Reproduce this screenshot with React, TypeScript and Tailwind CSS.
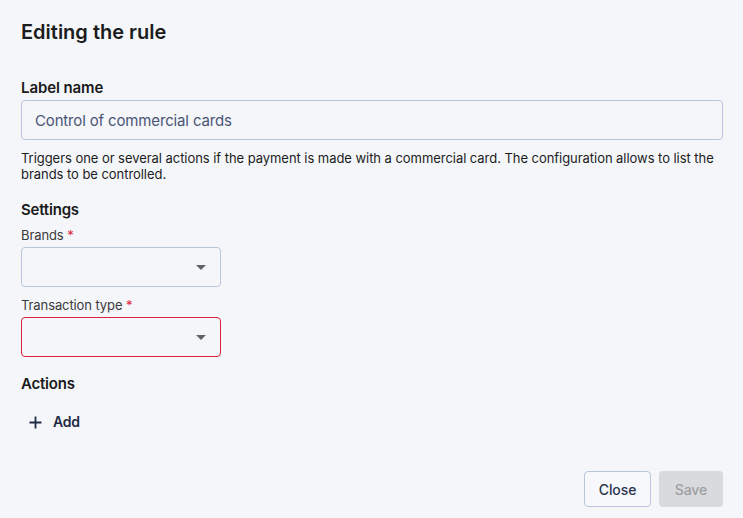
import React from "react";

function Caret() {
  return (
    <svg width="10" height="5" viewBox="0 0 10 5" className="text-[#5f6368]">
      <path d="M0 0 L10 0 L5 5 Z" fill="currentColor" />
    </svg>
  );
}

function Select({ error }: { error?: boolean }) {
  return (
    <div
      className={`w-[200px] h-[40px] rounded-[4px] border flex items-center justify-end pr-[14px] ${
        error ? "border-[#e0203a]" : "border-[#b9c5dc]"
      }`}
    >
      <Caret />
    </div>
  );
}

export default function App() {
  return (
    <div
      className="w-[743px] h-[518px] bg-[#f4f6fa] text-[#1a1a1a] flex flex-col pl-[21px] pr-[20px]"
      style={{ fontFamily: "Inter, 'Noto Sans', sans-serif" }}
    >
      <h1 className="text-[20px] font-semibold leading-[24px] mt-[20px] text-[#1c1c1c] tracking-[0px]">
        Editing the rule
      </h1>
      <div className="text-[15px] font-semibold leading-[20px] mt-[34px] tracking-[-0.1px]">Label name</div>
      <div className="mt-[2px] h-[40px] w-[702px] rounded-[4px] border border-[#b9c5dc] flex items-center px-[13px] pt-[2px] text-[15px] text-[#4a5575] tracking-[-0.15px]">
        Control of commercial cards
      </div>
      <p className="mt-[10px] text-[13px] leading-[16px] text-[#1c1c1c] tracking-[-0.05px]">
        Triggers one or several actions if the payment is made with a commercial card. The configuration allows to list the brands to be controlled.
      </p>
      <div className="text-[15px] font-semibold leading-[20px] mt-[18px] tracking-[-0.2px]">Settings</div>
      <div className="text-[13px] leading-[16px] mt-[7px] text-[#3a3a3a] tracking-[-0.1px]">
        Brands <span className="text-[#e0203a]">*</span>
      </div>
      <div className="mt-[4px]">
        <Select />
      </div>
      <div className="text-[13px] leading-[16px] mt-[10px] text-[#3a3a3a] tracking-[-0.1px]">
        Transaction type <span className="text-[#e0203a]">*</span>
      </div>
      <div className="mt-[4px]">
        <Select error />
      </div>
      <div className="text-[15px] font-semibold leading-[20px] mt-[17px] tracking-[-0.2px]">Actions</div>
      <div className="mt-[18px] flex items-center gap-[11px] pl-[8px] text-[#1f2a44]">
        <svg width="13" height="13" viewBox="0 0 13 13">
          <path d="M6.5 0.5 V12.5 M0.5 6.5 H12.5" stroke="currentColor" strokeWidth="1.8" />
        </svg>
        <span className="text-[14px] font-semibold leading-[20px] tracking-[-0.2px]">Add</span>
      </div>
      <div className="flex-1" />
      <div className="flex justify-end gap-[8px] mb-[11px]">
        <button className="h-[36px] w-[67px] rounded-[4px] border border-[#b9c5dc] bg-[#f7f8fb] text-[14px] font-medium text-[#2b3550] tracking-[-0.1px]">
          Close
        </button>
        <button className="h-[36px] w-[64px] rounded-[4px] bg-[#d9dadd] text-[14px] font-medium text-[#9d9fa3] tracking-[-0.1px]">
          Save
        </button>
      </div>
    </div>
  );
}
